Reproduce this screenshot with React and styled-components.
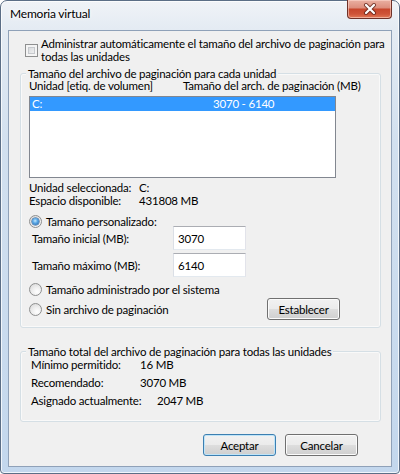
import React from 'react';
import styled, { createGlobalStyle, css } from 'styled-components';

const FONT = `Lato, "Open Sans", sans-serif`;

const Global = createGlobalStyle`
  html, body { margin: 0; padding: 0; background: #ffffff; }
  body {
    width: 400px; height: 474px; overflow: hidden;
    font-family: ${FONT}; font-size: 11.5px; letter-spacing: -0.2px; color: #000;
  }
  * { box-sizing: border-box; }
`;

const Window = styled.div`
  width: 400px;
  height: 474px;
  display: flex;
  flex-direction: column;
  border: 1px solid #5b6e86;
  border-radius: 7px 7px 4px 4px;
  padding: 0 7px 6px;
  background: linear-gradient(180deg, #f0f3f7 0px, #e4ebf3 28px, #d2e0ef 140px, #c3d7ed 100%);
  box-shadow: inset 0 0 0 1px rgba(255, 255, 255, 0.75);
`;

const TitleBar = styled.div`
  height: 29px;
  flex: none;
  display: flex;
  justify-content: space-between;
  align-items: flex-start;
`;

const Title = styled.div`
  padding: 7px 0 0 2px;
  font-size: 12px;
  line-height: 12px;
  text-shadow: 0 0 6px #fff, 0 0 3px #fff;
`;

const CloseButton = styled.div`
  width: 45px;
  height: 19px;
  margin-top: -1px;
  display: flex;
  align-items: center;
  justify-content: center;
  border: 1px solid #6f3128;
  border-top: none;
  border-radius: 0 0 4px 4px;
  background: linear-gradient(180deg, #eab0a2 0%, #dd8f7e 42%, #c8472d 52%, #cf5438 78%, #e27a58 100%);
  box-shadow: inset 0 0 0 1px rgba(255, 220, 210, 0.55);
`;

const Client = styled.div`
  flex: 1;
  display: flex;
  flex-direction: column;
  padding-top: 6px;
  background: #f0f0f0;
  border: 1px solid #8fa1b8;
`;

const CheckRow = styled.div`
  display: flex;
  align-items: center;
  gap: 3px;
  margin-left: 16px;
`;

const CheckBox = styled.span`
  flex: none;
  width: 13px;
  height: 13px;
  border: 1px solid #8e8f8f;
  background: linear-gradient(135deg, #cdd0d4 0%, #e8e9ea 60%, #f7f7f7 100%);
  box-shadow: inset 0 0 0 2px #f4f4f4, inset 0 0 0 3px #c6c9cd;
`;

const CheckLabel = styled.span`
  line-height: 13px;
`;

const Group = styled.div`
  margin: ${(p) => p.$mt}px 10px 0 11px;
  padding: 0 8px ${(p) => p.$pb}px 8px;
  border: 1px solid #d5dfe5;
  border-radius: 3px;
  box-shadow: inset 0 0 0 1px rgba(255, 255, 255, 0.6);
`;

const GroupTitle = styled.div`
  width: fit-content;
  margin: -6px 0 0 -3px;
  padding: 0 2px;
  line-height: 12px;
  background: #f0f0f0;
`;

const ListHeader = styled.div`
  display: flex;
  line-height: 12px;
`;

const Col = styled.span`
  flex: none;
  width: ${(p) => (p.$w ? `${p.$w}px` : 'auto')};
  white-space: nowrap;
`;

const ListBox = styled.div`
  width: 307px;
  height: 82px;
  margin-top: 4px;
  border: 1px solid #828790;
  background: #ffffff;
`;

const ListRow = styled.div`
  display: flex;
  height: 14px;
  line-height: 14px;
  padding-left: 2px;
  ${(p) =>
    p.$selected &&
    css`
      background: #3399ff;
      color: #ffffff;
    `}
`;

const InfoList = styled.div`
  display: flex;
  flex-direction: column;
  gap: ${(p) => p.$gap}px;
  margin-top: ${(p) => p.$mt}px;
  padding-left: ${(p) => p.$pl}px;
`;

const InfoRow = styled.div`
  display: flex;
  line-height: 13px;
  white-space: nowrap;
`;

const InfoLabel = styled.span`
  flex: none;
  width: ${(p) => p.$w}px;
`;

const RadioRow = styled.div`
  display: flex;
  align-items: center;
  gap: 4px;
  line-height: 13px;
  margin-top: ${(p) => p.$mt || 0}px;
`;

const Radio = styled.span`
  flex: none;
  width: 13px;
  height: 13px;
  border-radius: 50%;
  border: 1px solid #8e8f8f;
  background: radial-gradient(circle at 65% 70%, #ffffff 0%, #eeeeee 45%, #d4d4d4 100%);
  display: flex;
  align-items: center;
  justify-content: center;
  ${(p) =>
    p.$checked &&
    css`
      &::after {
        content: '';
        width: 7px;
        height: 7px;
        border-radius: 50%;
        background: radial-gradient(circle at 45% 40%, #c4e8fd 0%, #5aa8e6 40%, #1c5a9e 100%);
        box-shadow: 0 0 0 0.5px #1b4f88;
      }
    `}
`;

const Fields = styled.div`
  display: flex;
  flex-direction: column;
  gap: 3px;
  margin-top: -2px;
`;

const FieldRow = styled.div`
  display: flex;
  align-items: center;
  padding-left: 3px;
`;

const FieldLabel = styled.span`
  width: 141px;
  flex: none;
`;

const TextBox = styled.input`
  width: 73px;
  height: 24px;
  padding: 0 4px;
  border: 1px solid;
  border-color: #abadb3 #e2e3ea #e3e9ef #dbdfe6;
  background: #ffffff;
  font: inherit;
  letter-spacing: inherit;
  color: #000;
  outline: none;
`;

const ActionRow = styled.div`
  display: flex;
  align-items: center;
  justify-content: space-between;
  margin-top: 2px;
  padding-right: 32px;
`;

const Button = styled.button`
  width: 73px;
  height: 22px;
  padding: 0;
  font: inherit;
  letter-spacing: inherit;
  color: #000;
  border: 1px solid ${(p) => (p.$default ? '#3c7fb1' : '#707070')};
  border-radius: 3px;
  background: linear-gradient(180deg, #f2f2f2 0%, #ebebeb 48%, #dddddd 52%, #cfcfcf 100%);
  box-shadow: inset 0 0 0 1px ${(p) => (p.$default ? '#bfe4f8' : '#fbfbfb')};
`;

const ButtonBar = styled.div`
  display: flex;
  justify-content: flex-end;
  gap: 9px;
  margin-top: 12px;
  padding-right: 33px;
`;

export default function App() {
  return (
    <>
      <Global />
      <Window>
        <TitleBar>
          <Title>Memoria virtual</Title>
          <CloseButton aria-label="Cerrar">
            <svg width="14" height="12" viewBox="0 0 14 12">
              <path d="M3 2 L11 10 M11 2 L3 10" stroke="#5a1d14" strokeOpacity="0.75" strokeWidth="4" strokeLinecap="round" fill="none" />
              <path d="M3 2 L11 10 M11 2 L3 10" stroke="#ffffff" strokeWidth="2.2" strokeLinecap="round" fill="none" />
            </svg>
          </CloseButton>
        </TitleBar>
        <Client>
          <CheckRow>
            <CheckBox />
            <CheckLabel>
              Administrar automáticamente el tamaño del archivo de paginación para
              <br />
              todas las unidades
            </CheckLabel>
          </CheckRow>

          <Group $mt={10} $pb={7}>
            <GroupTitle>Tamaño del archivo de paginación para cada unidad</GroupTitle>
            <ListHeader>
              <Col $w={154}>Unidad [etiq. de volumen]</Col>
              <Col>Tamaño del arch. de paginación (MB)</Col>
            </ListHeader>
            <ListBox>
              <ListRow $selected>
                <Col $w={181}>C:</Col>
                <Col>3070 - 6140</Col>
              </ListRow>
            </ListBox>
            <InfoList $mt={3} $gap={0} $pl={0}>
              <InfoRow>
                <InfoLabel $w={110}>Unidad seleccionada:</InfoLabel>
                <span>C:</span>
              </InfoRow>
              <InfoRow>
                <InfoLabel $w={110}>Espacio disponible:</InfoLabel>
                <span>431808 MB</span>
              </InfoRow>
            </InfoList>
            <RadioRow $mt={8}>
              <Radio $checked />
              <span>Tamaño personalizado:</span>
            </RadioRow>
            <Fields>
              <FieldRow>
                <FieldLabel>Tamaño inicial (MB):</FieldLabel>
                <TextBox defaultValue="3070" />
              </FieldRow>
              <FieldRow>
                <FieldLabel>Tamaño máximo (MB):</FieldLabel>
                <TextBox defaultValue="6140" />
              </FieldRow>
            </Fields>
            <RadioRow $mt={6}>
              <Radio />
              <span>Tamaño administrado por el sistema</span>
            </RadioRow>
            <ActionRow>
              <RadioRow>
                <Radio />
                <span>Sin archivo de paginación</span>
              </RadioRow>
              <Button>Establecer</Button>
            </ActionRow>
          </Group>

          <Group $mt={23} $pb={14}>
            <GroupTitle>Tamaño total del archivo de paginación para todas las unidades</GroupTitle>
            <InfoList $mt={0} $gap={5} $pl={2}>
              <InfoRow>
                <InfoLabel $w={109}>Mínimo permitido:</InfoLabel>
                <span>16 MB</span>
              </InfoRow>
              <InfoRow>
                <InfoLabel $w={109}>Recomendado:</InfoLabel>
                <span>3070 MB</span>
              </InfoRow>
              <InfoRow>
                <InfoLabel $w={126}>Asignado actualmente:</InfoLabel>
                <span>2047 MB</span>
              </InfoRow>
            </InfoList>
          </Group>

          <ButtonBar>
            <Button $default>Aceptar</Button>
            <Button>Cancelar</Button>
          </ButtonBar>
        </Client>
      </Window>
    </>
  );
}
